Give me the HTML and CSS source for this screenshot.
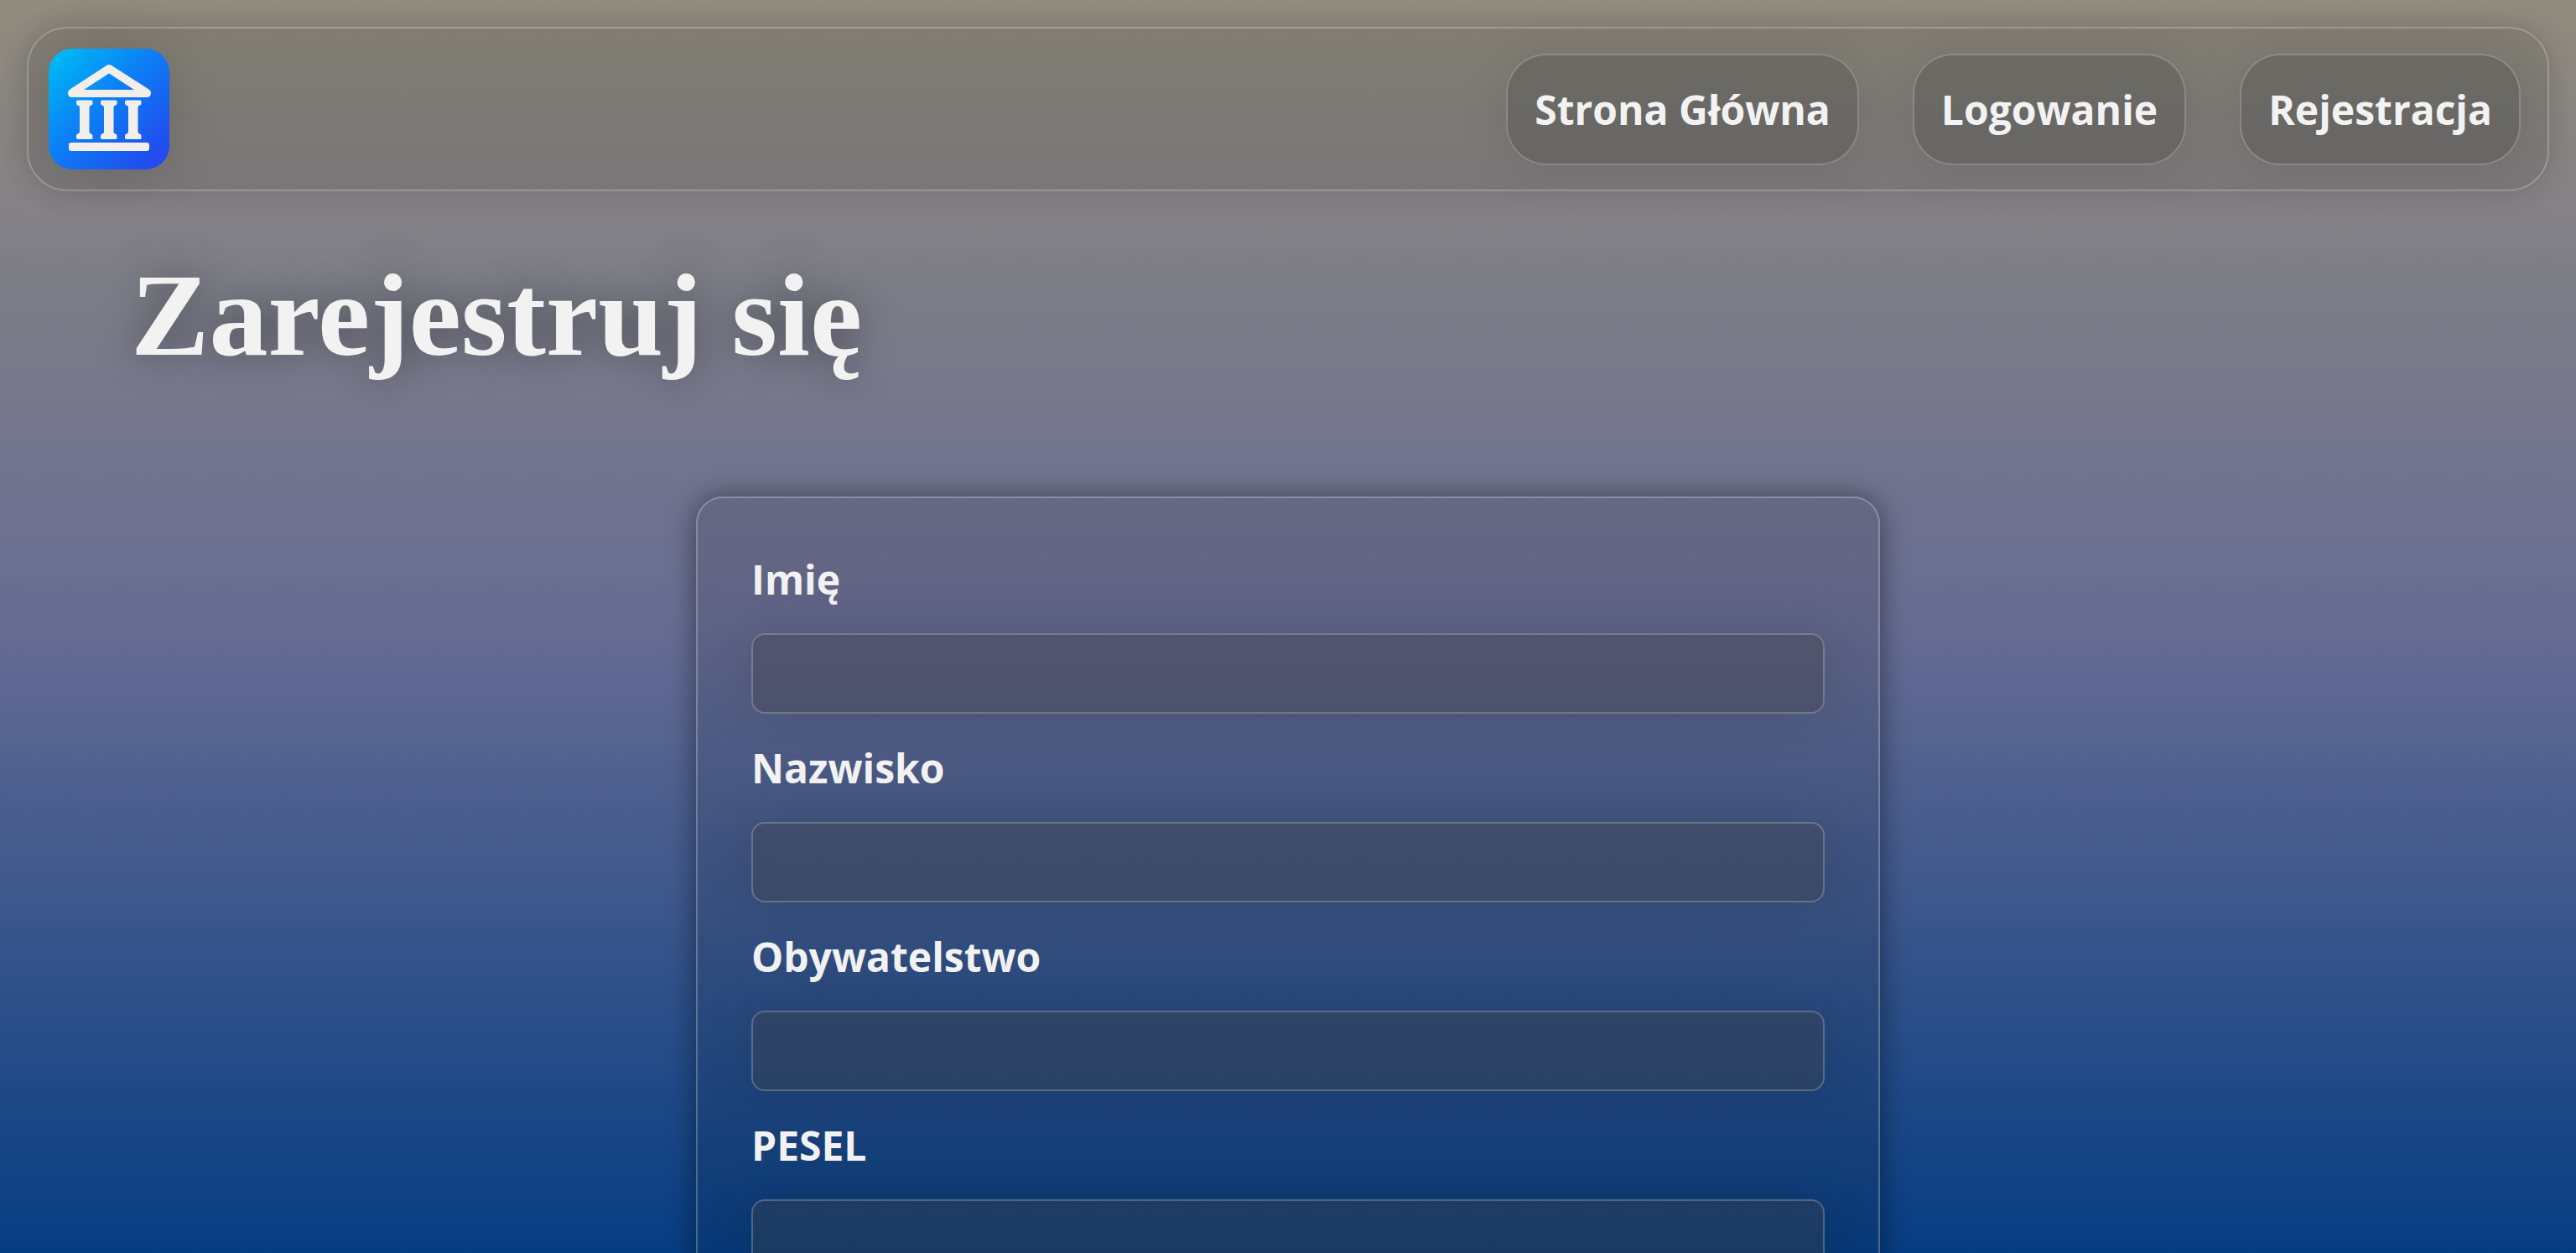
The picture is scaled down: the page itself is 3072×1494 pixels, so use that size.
FILE: index.html
```html
<!DOCTYPE html>
<html lang="pl">
<head>
<meta charset="utf-8">
<meta name="viewport" content="width=device-width, initial-scale=1">
<title>Zarejestruj się</title>
<link rel="stylesheet" href="styles.css">
</head>
<body>
<header class="topbar">
  <a class="logo" href="#" aria-label="Strona Główna">
    <svg viewBox="0 0 144 144" aria-hidden="true">
      <defs>
        <linearGradient id="tile" x1="0" y1="0" x2="1" y2="1">
          <stop offset="0" stop-color="#00c0f4"/>
          <stop offset="0.1" stop-color="#00b2f5"/>
          <stop offset="0.45" stop-color="#0c7ff5"/>
          <stop offset="0.85" stop-color="#2050ef"/>
          <stop offset="1" stop-color="#2843ec"/>
        </linearGradient>
      </defs>
      <rect width="144" height="144" rx="28" fill="url(#tile)"/>
      <g fill="#f2efeb">
        <path fill-rule="evenodd" d="M69.500 19.800Q72 18.200 74.500 19.800L119.500 48.500Q122 50.300 122 53Q122 58 117 58H28Q23 58 23 53Q23 50.300 25.500 48.500ZM72 29.500L42 49H102Z"/>
        <path id="column" d="M34.500 61.500H51Q52.500 61.500 52.500 63V65.500Q52.500 67.500 50.500 67.500Q48.500 68 48.500 70V99Q48.500 101 50.500 101.500Q52.500 101.500 52.500 104V106.500Q52.500 108 51 108H34.500Q33 108 33 106.500V104Q33 101.500 35 101.500Q37 101 37 99V70Q37 68 35 67.500Q33 67.500 33 65.500V63Q33 61.500 34.500 61.500Z"/>
        <use href="#column" x="29"/>
        <use href="#column" x="58"/>
        <rect x="24" y="112" width="96" height="10" rx="3"/>
      </g>
    </svg>
  </a>
  <nav class="menu">
    <a class="menu-link" href="#">Strona Główna</a>
    <a class="menu-link" href="#">Logowanie</a>
    <a class="menu-link" href="#">Rejestracja</a>
  </nav>
</header>
<main class="page">
  <h1 class="title">Zarejestruj się</h1>
  <form class="card">
    <label class="label" for="imie">Imię</label>
    <input class="input" id="imie" type="text">
    <label class="label" for="nazwisko">Nazwisko</label>
    <input class="input" id="nazwisko" type="text">
    <label class="label" for="obywatelstwo">Obywatelstwo</label>
    <input class="input" id="obywatelstwo" type="text">
    <label class="label" for="pesel">PESEL</label>
    <input class="input" id="pesel" type="text">
  </form>
</main>
</body>
</html>
```
FILE: styles.css
```css
* {
  box-sizing: border-box;
}

html {
  height: 100%;
}

body {
  height: 100%;
  margin: 0;
  overflow-y: auto;
  scrollbar-width: none;
  background: linear-gradient(#918c7e, #676c93 50%, #063d82) fixed;
  color: #f2f2f2;
  font-family: "Open Sans", sans-serif;
  font-size: 48px;
  font-weight: 700;
  line-height: 65px;
}

.topbar {
  display: flex;
  align-items: center;
  justify-content: space-between;
  margin: 32px;
  padding: 24px 32px 24px 24px;
  border: 2px solid rgba(255, 255, 255, 0.24);
  border-radius: 48px;
  background: rgba(16, 16, 16, 0.1);
  box-shadow: 0 0 32px rgba(0, 0, 0, 0.15);
}

.logo {
  width: 144px;
  height: 144px;
  border-radius: 28px;
  box-shadow: 0 0 64px rgba(0, 0, 0, 0.15);
}

.logo svg {
  display: block;
}

.menu {
  display: flex;
  gap: 64px;
}

.menu-link {
  padding: 32px;
  border: 2px solid rgba(255, 255, 255, 0.22);
  border-radius: 48px;
  background: rgba(64, 64, 64, 0.3);
  box-shadow: 0 0 64px rgba(0, 0, 0, 0.1);
  color: inherit;
  text-decoration: none;
}

.page {
  padding: 0 156px 64px;
}

.title {
  margin: 0;
  padding: 20px 0 120px;
  font-family: "Liberation Serif", serif;
  font-size: 140px;
  line-height: 192px;
  text-shadow: 0 0 48px rgba(0, 0, 0, 0.4);
}

.card {
  display: grid;
  gap: 32px;
  max-width: 1412px;
  margin: 0 auto;
  padding: 64px;
  border: 2px solid rgba(255, 255, 255, 0.24);
  border-radius: 32px;
  background: rgba(16, 16, 16, 0.1);
  box-shadow: 0 0 32px rgba(0, 0, 0, 0.45);
}

.input {
  width: 100%;
  height: 96px;
  padding: 0 24px;
  border: 2px solid rgba(255, 255, 255, 0.22);
  border-radius: 16px;
  outline: none;
  background: rgba(64, 64, 64, 0.35);
  box-shadow: 0 0 64px rgba(0, 0, 0, 0.12);
  color: inherit;
  font: inherit;
}
```
